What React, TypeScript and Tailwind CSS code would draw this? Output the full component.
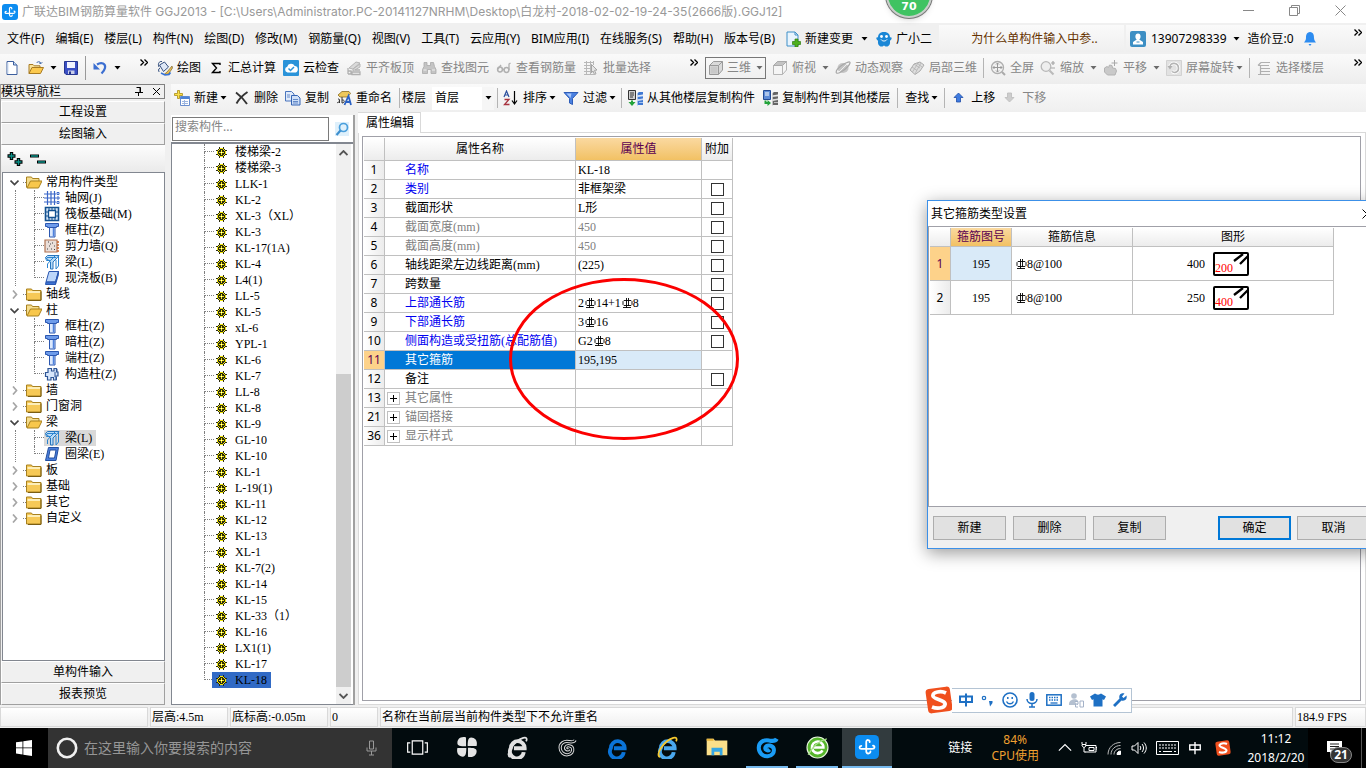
import { useState } from "react"
import type { ReactNode } from "react"

const UI_FONT = "font-['Noto_Sans','Noto_Sans_CJK_SC',sans-serif]"

// grid and tree text
function Song({ text }: { text: string }) {
  return <span className="font-['Liberation_Serif','Noto_Sans_CJK_SC',serif]">{text}</span>
}

function Svg({ children, size = "size-4" }: { children: ReactNode; size?: string }) {
  return (
    <svg viewBox="0 0 16 16" className={`${size} shrink-0`} fill="none" aria-hidden="true">
      {children}
    </svg>
  )
}

function Caret({ color = "text-black" }: { color?: string }) {
  return (
    <svg viewBox="0 0 7 4" className={`w-[7px] h-1 shrink-0 ${color}`} aria-hidden="true">
      <path d="M0.5 0h6L3.5 3.5z" fill="currentColor" />
    </svg>
  )
}

function More() {
  return (
    <svg viewBox="0 0 8 7" className="w-2 h-[7px] shrink-0" fill="none" stroke="#000" strokeWidth="1.4" aria-hidden="true">
      <path d="M0.5 0.5l3 3-3 3M4.5 0.5l3 3-3 3" />
    </svg>
  )
}

function AppLogo({ size = "size-4" }: { size?: string }) {
  return (
    <Svg size={size}>
      <rect width="16" height="16" rx="3" fill="#0c8cf0" />
      <path
        d="M9.800 4.800c.2-1.800-2.300-2-2.300-.2v6.200c0 2 2.600 2 2.800.2M4.200 7.300c-1.600.2-1.500 2 0 2h7.200c2 0 2-2 .6-2.200"
        stroke="#fff"
        strokeWidth="1.200"
        strokeLinecap="round"
      />
    </Svg>
  )
}

const icons = {
  doc: (
    <Svg>
      <path d="M3 1.500h6.500L13 5v9.500H3z" fill="#fff" stroke="#3d5f9e" />
      <path d="M9.500 1.500V5H13" fill="#c8dcf4" stroke="#3d5f9e" />
      <path d="M4 13.500V3" stroke="#cfe0f5" />
    </Svg>
  ),
  open: (
    <Svg>
      <path d="M1 13.500V4.500h4l1.200 1.300H12v2" fill="#f8e29a" stroke="#a87b22" />
      <path d="M1 13.500l3-6h11.500l-3 6z" fill="#fbc94e" stroke="#a87b22" />
      <path d="M8.500 3c1.500-2 4-1.500 4.500.5m0 0l1.300-1.300M13 3.500l-2-.6" stroke="#3c66a8" />
    </Svg>
  ),
  save: (
    <Svg>
      <path d="M1.500 1.500h13v13H3l-1.500-1.500z" fill="#3a4fc4" stroke="#27368f" />
      <path d="M4 2h8v6H4z" fill="#f2f4ff" />
      <path d="M5 10.500h6.500V14H5z" fill="#c9cfe9" />
      <path d="M6 11.500h2V14H6z" fill="#27368f" />
    </Svg>
  ),
  undo: (
    <Svg>
      <path d="M5 4.500c4.500-3 9-1 8 3.500-.5 2.500-2 4-3.500 5.500" stroke="#3c6fd1" strokeWidth="2.200" />
      <path d="M1.500 3v6.500H8z" fill="#3c6fd1" />
    </Svg>
  ),
  paint: (
    <Svg>
      <path d="M2.500 5l5-3 4 5-5 4.500z" fill="#dfe8f6" stroke="#35507f" />
      <path d="M2 7c-1.500-3 0-6 3-5.500M3 8c-2 1-1.500 3-.8 4" stroke="#35507f" />
      <path d="M15 6l-5 6-3 2.500 4.500-.5L15.500 8z" fill="#e8bf50" stroke="#7b6430" strokeWidth=".7" />
      <path d="M4 13l4 2 4-.5 1.500-2" stroke="#3572d6" strokeWidth="1.600" />
    </Svg>
  ),
  sigma: (
    <Svg>
      <path d="M12 5V3.500H4.500L8.500 8l-4 4.500H12V11" stroke="#000" strokeWidth="1.400" />
    </Svg>
  ),
  cloud: (
    <Svg>
      <rect width="16" height="16" rx="1" fill="#2a93d9" />
      <path d="M4.500 12.500a3 3 0 01-.3-5.800 4 4 0 017.500-.6 3.200 3.200 0 01-.2 6.400z" fill="#fff" />
      <path d="M5.500 8.500l2 2 3.500-3.500" stroke="#2a93d9" strokeWidth="1.500" />
    </Svg>
  ),
  flatten: (
    <Svg>
      <path d="M3 8l7-6 4 1-7 6zM7 9l7-5v3l-7 4z" fill="#d9d9d9" stroke="#b5b5b5" />
      <path d="M2 8v6M2 14h3v-3H2M6 12h8v2.500H6zM9 10h5" stroke="#b0b0b0" strokeWidth="1.300" />
    </Svg>
  ),
  binoculars: (
    <Svg>
      <path d="M3 2.500h3v3h3.500v-3h3l1 4 1.500 3v4h-5v-4h-3.500v4h-5v-4l1.500-3z" fill="#c4c4c4" stroke="#aaa" strokeWidth=".8" />
      <path d="M2.500 10h3M11 10h3" stroke="#eee" />
    </Svg>
  ),
  glasses: (
    <Svg>
      <circle cx="4" cy="9.500" r="2.400" stroke="#b0b0b0" strokeWidth="1.500" />
      <circle cx="10.500" cy="10" r="2.400" stroke="#b0b0b0" strokeWidth="1.500" />
      <path d="M6.500 9.500h1.500M2 9l3-4M13 10V4l1.500-1" stroke="#b0b0b0" strokeWidth="1.300" />
    </Svg>
  ),
  batch: (
    <Svg>
      <path d="M1 2.500h10M1 5.500h8M1 8.500h7M1 11.500h7M1 14.500h10M3.500 1v14M7.500 1v14M10.500 1v4" stroke="#b8b8b8" />
      <path d="M8.500 4.500l5.500 5.500-2.500.3 1.500 3.500-1.500.7-1.500-3.500-1.500 1.800z" fill="#e6e6e6" stroke="#a5a5a5" />
    </Svg>
  ),
  cube: (
    <Svg>
      <path d="M1.500 5.500l4-4h9v8.500l-4 4.500h-9z" fill="#dadada" stroke="#9a9a9a" />
      <path d="M1.500 5.500h9v9M10.500 5.500l4-4" stroke="#9a9a9a" />
      <path d="M2.500 6.500h7v7h-7z" fill="#c9c9c9" />
    </Svg>
  ),
  topView: (
    <Svg>
      <path d="M1.500 5.500l4-4h9v8.500l-4 4.500h-9z" fill="#f5f5f5" stroke="#b5b5b5" />
      <path d="M1.500 5.500l4-4h9l-4 4z" fill="#c4c4c4" stroke="#aaa" />
      <path d="M10.500 5.500v9" stroke="#b5b5b5" />
    </Svg>
  ),
  orbit: (
    <Svg>
      <ellipse cx="8" cy="8" rx="5.500" ry="5" fill="#c4c4c4" />
      <path d="M1.500 13C0 11 4 7 8 4.500S15.500 1 15 3s-4 6-7.500 8S3 14 1.500 13z" stroke="#a8a8a8" strokeWidth="1.200" />
      <path d="M4 12L12 4" stroke="#eee" />
    </Svg>
  ),
  partial: (
    <Svg>
      <path d="M1 10l4-6 6-2 4 3-4 6-5 3.500z" fill="#dedede" stroke="#acacac" />
      <path d="M3 7l5 3.500M5 4l6 4M8 3l5 4M6 14l2-4 4-7M3.500 12L9 3" stroke="#b2b2b2" strokeWidth=".8" />
    </Svg>
  ),
  full: (
    <Svg>
      <circle cx="7.500" cy="7.500" r="6" fill="#f2f2f2" stroke="#aeaeae" strokeWidth="1.300" />
      <path d="M7.500 3v9M3 7.500h9M6 4.500L7.500 3 9 4.500M6 10.500L7.500 12 9 10.500M4.500 6L3 7.500 4.500 9M10.500 6L12 7.500 10.500 9" stroke="#999" />
      <path d="M12 12l3 3" stroke="#aaa" strokeWidth="2" />
    </Svg>
  ),
  zoomer: (
    <Svg>
      <circle cx="6" cy="6.500" r="4.800" fill="#eee" stroke="#b8b8b8" strokeWidth="1.300" />
      <path d="M9.500 10.500l4 4" stroke="#bbb" strokeWidth="2.200" />
      <path d="M11 3h4M13 1v4M11 8h4" stroke="#a5a5a5" strokeWidth="1.200" />
    </Svg>
  ),
  pan: (
    <Svg>
      <path d="M1.500 8l2.500-1.500 1.500 1 1-2.500 2.500.5.5 2.500 3 .5 1 2.500-1.500 4H4.500l-3-3z" fill="#c9c9c9" stroke="#b3b3b3" />
      <path d="M11.500 0v6M8.500 3h6" stroke="#a8a8a8" />
    </Svg>
  ),
  rotate: (
    <Svg>
      <path d="M.5.5h15v15H.5z" fill="#e2e2e2" stroke="#d2d2d2" />
      <path d="M4 7c0-5 8-5 8.500 1 .3 4-4 5.500-6.500 3.500" stroke="#fff" strokeWidth="3.400" />
      <path d="M4 7c0-5 8-5 8.500 1 .3 4-4 5.500-6.500 3.500" stroke="#b4b4b4" strokeWidth="1.600" />
      <path d="M1.500 6h5L4 9.500z" fill="#b0b0b0" />
    </Svg>
  ),
  floors: (
    <Svg>
      <path d="M5 2.500h9M2 5.500h11M5 8.500h9M5 11.500h9M2 14.500h12M2 5.500L5 2.500M4.500 6v8" stroke="#b0b0b0" strokeWidth="1.200" />
    </Svg>
  ),
  add: (
    <Svg>
      <path d="M6.500 6.500h9v9h-9z" fill="#fff" stroke="#6b8fce" />
      <path d="M6.500 6.500h9V9h-9z" fill="#4d82d6" />
      <path d="M8 11.500h6M8 13.500h6M10.500 10v5" stroke="#9db6e0" />
      <path d="M3.500.5h2v3h3v2h-3v3h-2v-3h-3v-2h3z" fill="#fbe04a" stroke="#a98d16" strokeWidth=".8" />
    </Svg>
  ),
  remove: (
    <Svg>
      <path d="M2 2.500c4 3 8 7 11 11.500M13.500 2C9 5 5 9 2.500 13.500" stroke="#333" strokeWidth="1.900" />
    </Svg>
  ),
  copy: (
    <Svg>
      <path d="M.5 1.500h6l2.500 2.500v7H.5z" fill="#dfeafa" stroke="#4a75bd" />
      <path d="M6.500 5.500h6l2.500 2.500v7H6.500z" fill="#cfe0f8" stroke="#3565b5" />
      <path d="M8 9.500h5M8 11.500h5M8 13h5M2 5h3M2 7h3" stroke="#4a75bd" strokeWidth=".8" />
    </Svg>
  ),
  rename: (
    <Svg>
      <path d="M2 5l4-3.500h7l1.500 2-3 3.500H4z" fill="#eec85b" stroke="#8a6d22" strokeWidth=".8" />
      <path d="M1 12.500c2.500 1 3.500-4 1-3.500M3.500 9.500v3.500M6 7v6c3 0 3-3.500 0-3" stroke="#333" />
      <path d="M8.500 15L12.500 6 15 15M10 12h4.500" stroke="#2b62c4" strokeWidth="1.800" />
    </Svg>
  ),
  sort: (
    <Svg>
      <path d="M1 7l2.500-6L6 7M2 5h3" stroke="#2b4f9e" strokeWidth="1.200" />
      <path d="M1.500 9.500h4.500l-4.500 5H6.500" stroke="#a8333f" strokeWidth="1.300" />
      <path d="M11.500 1v12M9 10.500l2.500 3.500 2.500-3.500" stroke="#000" strokeWidth="1.200" />
    </Svg>
  ),
  filter: (
    <Svg>
      <path d="M1 2.500h14L9.500 8.500v6l-3-1.500V8.500z" fill="#4a80e0" stroke="#2d5cb8" />
      <path d="M3.500 3.500h5l-1 4.500z" fill="#a9c7fa" />
    </Svg>
  ),
  fromFloor: (
    <Svg>
      <path d="M1.500.5h7v9h-7z" fill="#d0d0d0" stroke="#333" />
      <path d="M3 3h4M3 5h4M3 7h3" stroke="#333" />
      <path d="M10 3.500l2-1.500h4v2.500l-6 1zM10 7l6-1v2.500l-6 1zM10 11l6-1v5H10z" fill="#3f78d2" />
      <path d="M10.500 3v13M12 6h4M12 9.500h4M12 12.500h4" stroke="#bcd4f7" strokeWidth=".8" />
      <path d="M4 10.500v1.500H1.500l3.500 4 3.500-4H6v-1.500z" fill="#23a33a" />
    </Svg>
  ),
  toFloor: (
    <Svg>
      <path d="M1.500.5h7v9h-7z" fill="#5d8bd6" stroke="#234a94" />
      <path d="M3 3h4M3 5h4" stroke="#fff" />
      <path d="M10 3.500l2-1.500h4v2.500l-6 1zM10 7l6-1v2.500l-6 1zM10 11l6-1v5H10z" fill="#666" />
      <path d="M10.500 3v13M12 6h4M12 9.500h4M12 12.500h4" stroke="#d6d6d6" strokeWidth=".8" />
      <path d="M2.500 10.500v3.500h3V16l3.500-3-3.500-3v2h-1v-1.500z" fill="#23a33a" />
    </Svg>
  ),
  up: (
    <Svg>
      <path d="M7.500 3l4.500 4.500H9.500V12h-4V7.500H3z" fill="#3f7be0" stroke="#1f4ea8" strokeWidth=".8" />
    </Svg>
  ),
  down: (
    <Svg>
      <path d="M7.500 12L3 7.500h2.500V3h4v4.500H12z" fill="#cdcdcd" stroke="#bbb" strokeWidth=".8" />
    </Svg>
  ),
  change: (
    <Svg>
      <path d="M2 1h8l3 3v11H2z" fill="#e9f4fd" stroke="#3f8fc8" />
      <path d="M10 1v3h3" stroke="#3f8fc8" />
      <path d="M10 8h3v2.500h2.500v3H13V16h-3v-2.500H7.500v-3H10z" fill="#4db01e" stroke="#2f7d10" strokeWidth=".7" />
    </Svg>
  ),
  mascot: (
    <Svg>
      <path d="M8 1c4.500 0 6 2.500 6 5.500 1.500-.5 2 .5 1.500 1.500S14 9.500 14 10c.5 3-1 5-2.500 5.500H9.500l-1.500-1-1.500 1h-2C3 15 1.500 13 2 10c0-.5-1-1-1.500-2S.5 6 2 6.500C2 3.500 3.500 1 8 1z" fill="#1b87d6" />
      <circle cx="5.500" cy="5.500" r="1.400" fill="#fff" />
      <circle cx="10.500" cy="5.500" r="1.400" fill="#fff" />
      <path d="M5 8.500c1.500 2 4.500 2 6 0" stroke="#fff" />
    </Svg>
  ),
  user: (
    <Svg>
      <rect width="16" height="16" rx="2" fill="#3d8fc4" />
      <path d="M8 2.500c3.500 0 3 5 1.200 6L13 11v2.500H3V11l3.800-2.500C5 7.500 4.500 2.500 8 2.500z" fill="#fff" />
      <path d="M6.500 11h3" stroke="#3d8fc4" />
    </Svg>
  ),
  bell: (
    <Svg>
      <path d="M8 1c3.500.5 4 3 4 6 0 2 1 3 2 4.500H2C3 10 4 9 4 7c0-3 .5-5.500 4-6z" fill="#2d8cf0" />
      <path d="M6.500 13h3L8 15z" fill="#2d8cf0" />
    </Svg>
  ),
  folder: (
    <Svg>
      <path d="M.5 3h5l1 1.500h8.500v9.500H.5z" fill="#f6c957" stroke="#a8811f" />
      <path d="M1.500 6h12.500" stroke="#fdeeb8" strokeWidth="2" />
      <path d="M15 5.500v9H2" stroke="#7b5e14" />
    </Svg>
  ),
  folderOpen: (
    <Svg>
      <path d="M.5 13.500V3h5l1 1.500h6.500V7" fill="#f5dd8e" stroke="#a8811f" />
      <path d="M1 14l3.500-7H16l-3.500 7z" fill="#f8c74c" stroke="#a8811f" />
    </Svg>
  ),
  grid: (
    <Svg>
      <path d="M0 4h12M0 8h12M0 12h12M3.500 1v14M7 1v14M10.500 1v14" stroke="#3a66c8" strokeWidth="1.200" />
      <path d="M13 2.500h2v2h-2zM13 7h2v2h-2zM13 11.500h2v2h-2z" stroke="#3a66c8" />
    </Svg>
  ),
  raft: (
    <Svg>
      <path d="M1.500 1.500h13v13h-13z" fill="#dcebfb" stroke="#13508f" strokeWidth="1.600" />
      <path d="M4.500 4.500h7v7h-7z" fill="#fff" stroke="#13508f" strokeWidth="1.300" />
      <path d="M5 1.500v3M8 1.500v3M11 1.500v3M5 11.500v3M8 11.500v3M11 11.500v3M1.500 6h3M1.500 10h3M11.500 6h3M11.500 10h3" stroke="#13508f" />
    </Svg>
  ),
  column: (
    <Svg>
      <path d="M1.500 1.500h13v3h-2v1h-9v-1h-2z" fill="#6d9bea" stroke="#2b57b0" />
      <path d="M5.500 5.500h5.500v9.500H5.500z" fill="#dce9fd" stroke="#2b57b0" />
      <path d="M9.500 6v8.500" stroke="#4f82de" strokeWidth="1.500" />
    </Svg>
  ),
  wall: (
    <Svg>
      <path d="M1 2h12v12H1z" fill="#eadfda" stroke="#b07352" strokeWidth="1.200" />
      <path d="M4 4h1M8 5h1M5 8h1M10 8h1M3 11h1M7 11h1M10 11.500h1M6 6h1" stroke="#444" />
      <path d="M13 4h2M13 7h2M13 10h2M13 13h2" stroke="#c8642f" strokeWidth="1.300" />
    </Svg>
  ),
  beam: (
    <Svg>
      <path d="M1.500 3.500l2-2h11.500l-3 3.500-3 3v7h-2.500V8z" fill="#b9dcf8" stroke="#2675bd" />
      <path d="M1.500 3.500l1 3h4l5-5M6.500 6.500L3.500 10v4M14.500 2v10l-2.500 3V6M3 3.500h9" stroke="#2b84d0" />
    </Svg>
  ),
  slab: (
    <Svg>
      <path d="M5 1.500h9.500L11.500 12H2z" fill="#bcd6fa" stroke="#2b57b0" />
      <path d="M2 12h9.500v2.500H1.500zM11.500 12l3-10.500v3L11.500 14.500" fill="#3d72d2" stroke="#2b57b0" />
    </Svg>
  ),
  tieColumn: (
    <Svg>
      <path d="M4 2.500h3.500V5H10V2.500h2.500V6H14v4h-2v4H9.500v-2.500H7V14H3.500v-3.500H1.500v-4H4z" fill="#d7e6fb" stroke="#2e5596" strokeWidth="1.200" />
      <path d="M11 6v5M13 3v3M12.500 11v3" stroke="#2e5596" />
    </Svg>
  ),
  ringBeam: (
    <Svg>
      <path d="M4.500 1.500h10L12 14.500H1.500z" fill="#4a7edb" stroke="#234f9f" />
      <path d="M6 4h6l-1.500 8H4.500z" fill="#fff" stroke="#234f9f" />
    </Svg>
  ),
}

type IconName = keyof typeof icons

interface ToolProps {
  icon?: IconName
  label: string
  caret?: "near" | "far"
  disabled?: boolean
}

function Tool({ icon, label, caret, disabled }: ToolProps) {
  return (
    <button
      className={`flex items-center gap-1 shrink-0 whitespace-nowrap ${disabled ? "text-[#868686]" : "text-black"}`}
      disabled={disabled}
    >
      {icon && icons[icon]}
      <span>{label}</span>
      {caret && (
        <span className={caret === "near" ? "-ml-[2px]" : "ml-[2px]"}>
          <Caret color={disabled ? "text-[#6b6b6b]" : "text-black"} />
        </span>
      )}
    </button>
  )
}

function Separator() {
  return <div className="w-px h-5 bg-[#b4b4b4] shrink-0" />
}

const menus = [
  "文件(F)", "编辑(E)", "楼层(L)", "构件(N)", "绘图(D)", "修改(M)", "钢筋量(Q)", "视图(V)",
  "工具(T)", "云应用(Y)", "BIM应用(I)", "在线服务(S)", "帮助(H)", "版本号(B)",
]

function TitleBar() {
  return (
    <header className="relative flex items-center h-[23px] pl-[2px] bg-white text-[#999] shrink-0">
      <AppLogo />
      <h1 className="ml-1 flex-1 whitespace-nowrap font-['Inter','Noto_Sans_CJK_SC',sans-serif]">
        广联达BIM钢筋算量软件 GGJ2013 - [C:\Users\Administrator.PC-20141127NRHM\Desktop\白龙村-2018-02-02-19-24-35(2666版).GGJ12]
      </h1>
      <div className="flex items-center gap-[35px] pr-5 pb-[2px]">
        <button aria-label="最小化">
          <svg viewBox="0 0 11 11" className="size-[11px]" stroke="#888"><path d="M0 5.500h11" /></svg>
        </button>
        <button aria-label="还原">
          <svg viewBox="0 0 11 11" className="size-[11px]" stroke="#888" fill="none">
            <path d="M.5 2.500h8v8h-8zM2.500 2.500v-2h8v8h-2" />
          </svg>
        </button>
        <button aria-label="关闭">
          <svg viewBox="0 0 11 11" className="size-[11px]" stroke="#888"><path d="M.5.5l10 10M10.500.5l-10 10" /></svg>
        </button>
      </div>
      <div className="absolute left-[886px] -top-7 flex items-end justify-center size-[46px] pb-[3px] rounded-full bg-[#3fc362] border-2 border-[#c9cfcb] ring-1 ring-[#777] shadow-md text-white font-bold text-[11px] font-['DejaVu_Sans',sans-serif] z-10">
        <span className="leading-[12px]">70</span>
      </div>
    </header>
  )
}

function MenuBar() {
  return (
    <nav className="flex items-center h-[31px] bg-[#f0f0f0] shrink-0 whitespace-nowrap">
      <div className="flex items-center gap-[11px] pl-[7px]">
        {menus.map((m) => (
          <button key={m}>{m}</button>
        ))}
      </div>
      <div className="flex items-center gap-2 ml-[10px]">
        <button className="flex items-center gap-1">
          {icons.change}
          新建变更
        </button>
        <Caret />
        <button className="flex items-center gap-1">
          {icons.mascot}
          广小二
        </button>
      </div>
      <div className="flex flex-1 items-center justify-center h-[27px] ml-[7px] pl-[6px] bg-linear-to-b from-[#fafafa] to-[#efefef] text-[#663300]">
        <a href="#faq">为什么单构件输入中参..</a>
      </div>
      <div className="flex items-center h-[27px] w-[240px] ml-[2px] pl-1 bg-linear-to-b from-[#fafafa] to-[#efefef]">
        <button className="flex items-center gap-[5px]">
          {icons.user}
          13907298339
        </button>
        <div className="ml-[6px] flex"><Caret /></div>
        <span className="ml-2">造价豆:0</span>
        <button className="ml-2" aria-label="消息">{icons.bell}</button>
        <div className="ml-auto mb-3 mr-1"><More /></div>
      </div>
    </nav>
  )
}

function MainToolbar() {
  return (
    <div className="flex h-[30px] bg-linear-to-b from-[#fafafa] to-[#ededed] shrink-0 pb-[2px]">
      <div className="flex items-center w-[153px] pl-1 shrink-0">
        <button aria-label="新建工程">{icons.doc}</button>
        <button className="ml-2" aria-label="打开">{icons.open}</button>
        <div className="ml-[6px] flex"><Caret /></div>
        <button className="ml-[6px]" aria-label="保存">{icons.save}</button>
        <div className="w-px h-6 ml-[6px] bg-[#999]" />
        <button className="ml-[6px]" aria-label="撤销">{icons.undo}</button>
        <div className="ml-[6px] flex"><Caret /></div>
        <div className="ml-auto mr-[5px] mb-3 flex"><More /></div>
      </div>
      <div className="flex items-center gap-[7px] w-[549px] pl-1 shrink-0">
        <Tool icon="paint" label="绘图" />
        <Tool icon="sigma" label="汇总计算" />
        <Tool icon="cloud" label="云检查" />
        <Tool icon="flatten" label="平齐板顶" disabled />
        <Tool icon="binoculars" label="查找图元" disabled />
        <Tool icon="glasses" label="查看钢筋量" disabled />
        <Tool icon="batch" label="批量选择" disabled />
        <div className="ml-auto mr-1 mb-3 flex"><More /></div>
      </div>
      <div className="flex flex-1 items-center gap-[6px] pl-[3px]">
        <button className="flex items-center gap-[3px] h-[22px] w-[61px] px-[2px] border border-[#777] text-[#868686] whitespace-nowrap shrink-0" disabled>
          {icons.cube}
          三维
          <span className="ml-auto"><Caret color="text-[#6b6b6b]" /></span>
        </button>
        <Tool icon="topView" label="俯视" caret="far" disabled />
        <Tool icon="orbit" label="动态观察" disabled />
        <Tool icon="partial" label="局部三维" disabled />
        <Separator />
        <Tool icon="full" label="全屏" disabled />
        <Tool icon="zoomer" label="缩放" caret="far" disabled />
        <Tool icon="pan" label="平移" caret="far" disabled />
        <Tool icon="rotate" label="屏幕旋转" caret="near" disabled />
        <Separator />
        <Tool icon="floors" label="选择楼层" disabled />
        <div className="ml-auto mr-1 mb-3 flex"><More /></div>
      </div>
    </div>
  )
}

interface NavNode {
  label: string
  children?: { label: string; icon: IconName; selected?: boolean }[]
}

const navTree: NavNode[] = [
  {
    label: "常用构件类型",
    children: [
      { label: "轴网(J)", icon: "grid" },
      { label: "筏板基础(M)", icon: "raft" },
      { label: "框柱(Z)", icon: "column" },
      { label: "剪力墙(Q)", icon: "wall" },
      { label: "梁(L)", icon: "beam" },
      { label: "现浇板(B)", icon: "slab" },
    ],
  },
  { label: "轴线" },
  {
    label: "柱",
    children: [
      { label: "框柱(Z)", icon: "column" },
      { label: "暗柱(Z)", icon: "column" },
      { label: "端柱(Z)", icon: "column" },
      { label: "构造柱(Z)", icon: "tieColumn" },
    ],
  },
  { label: "墙" },
  { label: "门窗洞" },
  {
    label: "梁",
    children: [
      { label: "梁(L)", icon: "beam", selected: true },
      { label: "圈梁(E)", icon: "ringBeam" },
    ],
  },
  { label: "板" },
  { label: "基础" },
  { label: "其它" },
  { label: "自定义" },
]

function Elbow({ last }: { last?: boolean }) {
  return (
    <div className="w-[10px] h-4 shrink-0">
      <div className="h-2 border-l border-b border-dotted border-[#808080]" />
      {!last && <div className="h-2 border-l border-dotted border-[#808080]" />}
    </div>
  )
}

function NavButton({ label }: { label: string }) {
  return (
    <button className="h-[22px] shrink-0 leading-5 text-center border-t border-l border-white border-b border-b-[#a0a0a0] border-r border-r-[#a0a0a0] bg-[#f0f0f0]">
      {label}
    </button>
  )
}

function ModuleNav() {
  return (
    <aside className="flex flex-col w-[165px] shrink-0 mb-[2px] border-l border-[#a0a0a0]">
      <div className="flex items-center h-[15px] border border-[#808080] border-l-0 leading-3 shrink-0">
        <h2 className="flex-1 whitespace-nowrap">模块导航栏</h2>
        <button aria-label="固定">
          <svg viewBox="0 0 8 9" className="w-2 h-[9px]" fill="none" stroke="#000"><path d="M1.500.5h4v5M5 .5v5M0 5.500h8M3.500 5.500V9" /></svg>
        </button>
        <button className="ml-[9px] mr-[3px]" aria-label="关闭">
          <svg viewBox="0 0 9 9" className="size-[9px]" stroke="#000"><path d="M1 1l7 7M8 1L1 8" /></svg>
        </button>
      </div>
      <div className="h-[2px] shrink-0" />
      <NavButton label="工程设置" />
      <NavButton label="绘图输入" />
      <div className="flex items-center h-[27px] pl-[6px] shrink-0 bg-linear-to-b from-[#fdfdfd] to-[#eaeaea]">
        <button aria-label="展开">
          <svg viewBox="0 0 40 16" className="w-10 h-4" fill="none">
            <path d="M4.500 1v8M.5 5h8M11.500 7v8M7.500 11h8" stroke="#000" strokeWidth="3.400" />
            <path d="M4.500 2v6M1.500 5h6M11.500 8v6M8.500 11h6" stroke="#0a8f86" strokeWidth="1.400" />
            <path d="M23 5h9M30 11h9" stroke="#000" strokeWidth="3.200" />
            <path d="M24 5h7M31 11h7" stroke="#0a8f86" strokeWidth="1.400" />
          </svg>
        </button>
      </div>
      <ul className="flex-1 min-h-0 overflow-hidden pt-px ml-px bg-white border border-[#828790] leading-4">
        {navTree.map((node) => (
          <li key={node.label}>
            <div className="flex items-center h-4 pl-[7px]">
              <svg viewBox="0 0 9 9" className="size-[9px] shrink-0" fill="none" strokeWidth="1.700">
                {node.children ? <path d="M.5 2.500l4 4 4-4" stroke="#444" /> : <path d="M3 .5l3.500 4L3 8.500" stroke="#a6a6a6" />}
              </svg>
              <div className="w-[3px] ml-1 border-t border-dotted border-[#808080]" />
              {icons[node.children ? "folderOpen" : "folder"]}
              <span className="ml-1 whitespace-nowrap">{node.label}</span>
            </div>
            {node.children && (
              <ul className="ml-3 border-l border-dotted border-[#808080]">
                {node.children.map((child, i) => (
                  <li key={child.label} className="flex items-center h-4 pl-[18px]">
                    <Elbow last={i === node.children!.length - 1} />
                    <div className={`flex items-center h-4 pr-1 whitespace-nowrap ${child.selected ? "bg-[#d9d9d9]" : ""}`}>
                      {icons[child.icon]}
                      <span className="ml-[5px]">
                        <Song text={child.label} />
                      </span>
                    </div>
                  </li>
                ))}
              </ul>
            )}
          </li>
        ))}
      </ul>
      <NavButton label="单构件输入" />
      <NavButton label="报表预览" />
    </aside>
  )
}

function ComponentToolbar() {
  return (
    <div className="flex items-center gap-[7px] h-7 pl-[3px] shrink-0 bg-linear-to-b from-[#fafafa] to-[#efefef]">
      <Tool icon="add" label="新建" caret="near" />
      <Tool icon="remove" label="删除" />
      <Tool icon="copy" label="复制" />
      <Tool icon="rename" label="重命名" />
      <div className="flex items-center gap-[2px] shrink-0">
        <Separator />
        <label htmlFor="floor">楼层</label>
        <div className="relative flex items-center ml-1 h-[23px] w-[62px] bg-white">
          <select id="floor" className="appearance-none w-full h-full pl-[3px] pr-3 bg-white outline-none">
            <option>首层</option>
            <option>基础层</option>
          </select>
          <span className="absolute right-0 top-0 flex items-center justify-center h-full w-3 bg-[#f6f6f6] pointer-events-none">
            <Caret />
          </span>
        </div>
      </div>
      <div className="-ml-1 -mr-[2px]"><Separator /></div>
      <Tool icon="sort" label="排序" caret="near" />
      <Tool icon="filter" label="过滤" caret="near" />
      <div className="-mx-[2px]"><Separator /></div>
      <Tool icon="fromFloor" label="从其他楼层复制构件" />
      <Tool icon="toFloor" label="复制构件到其他楼层" />
      <Separator />
      <Tool label="查找" caret="near" />
      <div className="-mx-px"><Separator /></div>
      <Tool icon="up" label="上移" />
      <Tool icon="down" label="下移" disabled />
    </div>
  )
}

const components = [
  "楼梯梁-2", "楼梯梁-3", "LLK-1", "KL-2", "XL-3（XL）", "KL-3", "KL-17(1A)", "KL-4", "L4(1)", "LL-5", "KL-5",
  "xL-6", "YPL-1", "KL-6", "KL-7", "LL-8", "KL-8", "KL-9", "GL-10", "KL-10", "KL-1", "L-19(1)", "KL-11", "KL-12",
  "KL-13", "XL-1", "KL-7(2)", "KL-14", "KL-15", "KL-33（1）", "KL-16", "LX1(1)", "KL-17", "KL-18",
]

function Gear() {
  return (
    <svg viewBox="0 0 11 11" className="size-[11px] shrink-0" fill="none" aria-hidden="true">
      <path d="M3 0h1v1h3V0h1v2h1v1h2v1h-1v3h1v1H9v1H8v2H7v-1H4v1H3V9H2V8H0V7h1V4H0V3h2V2h1z" fill="#2a2a10" />
      <path d="M4 1h3v1H4zM4 9h3v1H4zM1 4h1v3H1zM9 4h1v3H9zM3 2h1v1H3zM7 2h1v1H7zM3 8h1v1H3zM7 8h1v1H7zM2 3h1v1H2zM8 3h1v1H8zM2 7h1v1H2zM8 7h1v1H8z" fill="#f6ec10" />
      <path d="M3 5h5v1H3zM5 3h1v5H5z" fill="#f6ec10" />
      <path d="M5 5h1v1H5z" fill="#fff" />
    </svg>
  )
}

function ComponentList() {
  const [query, setQuery] = useState("")
  const [selected, setSelected] = useState("KL-18")

  return (
    <section className="flex flex-col w-[184px] shrink-0 mt-[3px] border-r-2 border-[#a0a0a0] bg-white">
      <div className="flex items-center h-[27px] pl-px shrink-0 bg-white">
        <input
          type="text"
          value={query}
          onChange={(e) => setQuery(e.target.value)}
          placeholder="搜索构件..."
          aria-label="搜索构件"
          className="w-[157px] h-6 px-[2px] pb-1 border border-[#7a7a7a] bg-white outline-none placeholder:text-[#858585]"
        />
        <button className="flex items-center justify-center w-[14px] h-[14px] ml-[6px] bg-[#dff0fb]" aria-label="搜索">
          <svg viewBox="0 0 14 14" className="size-[14px]" fill="none">
            <circle cx="8.500" cy="5.500" r="4" stroke="#4a9fdc" strokeWidth="1.700" />
            <path d="M5.500 8.500l-4 4.500" stroke="#3d8fce" strokeWidth="2.200" />
          </svg>
        </button>
      </div>
      <div className="flex flex-1 min-h-0 overflow-hidden border-t-2 border-l border-b border-[#828790]">
        <ul className="flex-1 pl-8 leading-4">
          {components.map((name, i) => (
            <li key={name} className="flex items-center h-4">
              <Elbow last={i === components.length - 1} />
              <button
                onClick={() => setSelected(name)}
                className={`flex items-center h-4 -ml-[2px] pl-1 pr-1 whitespace-nowrap ${selected === name ? "bg-[#316ac5]" : ""}`}
              >
                <Gear />
                <span className="ml-2">
                  <Song text={name} />
                </span>
              </button>
            </li>
          ))}
        </ul>
        <div className="flex flex-col w-[15px] mr-[2px] bg-[#f0f0f0]">
          <div className="flex items-center justify-center h-[17px]">
            <svg viewBox="0 0 9 6" className="w-[9px] h-[6px]" fill="none" stroke="#555" strokeWidth="1.800"><path d="M.5 5l4-4 4 4" /></svg>
          </div>
          <div className="flex-1" />
          <div className="h-[313px] bg-[#cdcdcd]" />
          <div className="flex items-center justify-center h-[17px]">
            <svg viewBox="0 0 9 6" className="w-[9px] h-[6px]" fill="none" stroke="#555" strokeWidth="1.800"><path d="M.5 1l4 4 4-4" /></svg>
          </div>
        </div>
      </div>
    </section>
  )
}

// HRB400 bar mark
function Rebar() {
  return (
    <svg viewBox="0 0 12 12" className="inline-block w-3 h-3 align-[-2px]" fill="none" stroke="#000" aria-hidden="true">
      <path d="M3 3.500h7l1 1v3l-1 1H3l-1-1v-3zM5.500 1v10M7.500 1v8M2 10.500h8" strokeWidth=".9" />
    </svg>
  )
}

function withRebar(text: string) {
  return text.split("Φ").map((part, i) => (
    <span key={i}>
      {i > 0 && <Rebar />}
      <Song text={part} />
    </span>
  ))
}

interface PropRow {
  no: number
  name: string
  value?: string
  tone?: "blue" | "gray" | "black"
  check?: boolean
  group?: boolean
}

const rows: PropRow[] = [
  { no: 1, name: "名称", value: "KL-18", tone: "blue" },
  { no: 2, name: "类别", value: "非框架梁", tone: "blue", check: true },
  { no: 3, name: "截面形状", value: "L形", check: true },
  { no: 4, name: "截面宽度(mm)", value: "450", tone: "gray", check: true },
  { no: 5, name: "截面高度(mm)", value: "450", tone: "gray", check: true },
  { no: 6, name: "轴线距梁左边线距离(mm)", value: "(225)", check: true },
  { no: 7, name: "跨数量", check: true },
  { no: 8, name: "上部通长筋", value: "2Φ14+1Φ8", tone: "blue", check: true },
  { no: 9, name: "下部通长筋", value: "3Φ16", tone: "blue", check: true },
  { no: 10, name: "侧面构造或受扭筋(总配筋值)", value: "G2Φ8", tone: "blue", check: true },
  { no: 11, name: "其它箍筋", value: "195,195" },
  { no: 12, name: "备注", check: true },
  { no: 13, name: "其它属性", tone: "gray", group: true },
  { no: 21, name: "锚固搭接", tone: "gray", group: true },
  { no: 36, name: "显示样式", tone: "gray", group: true },
]

const toneClass = { blue: "text-[#0000f0]", gray: "text-[#808080]", black: "text-black" }
const cell = "p-0 border-r border-b border-[#c0c0c0] font-normal whitespace-nowrap"
const headFill = "bg-linear-to-b from-white to-[#ececec]"
const headActive = "bg-linear-to-b from-[#fad9a0] to-[#f2c163] text-[#5a0050]"

function PropertyTable() {
  return (
    <div className="relative w-[369px]">
      <table className="w-full table-fixed border-separate border-spacing-0 leading-[14px]">
        <colgroup>
          <col className="w-[21px]" />
          <col className="w-[191px]" />
          <col className="w-[126px]" />
          <col className="w-[31px]" />
        </colgroup>
        <thead>
          <tr className="h-[23px]">
            <th className={`${cell} ${headFill}`} />
            <th className={`${cell} ${headFill}`}>属性名称</th>
            <th className={`${cell} ${headActive}`}>属性值</th>
            <th className={`${cell} ${headFill}`}>附加</th>
          </tr>
        </thead>
        <tbody>
          {rows.map((row) => {
            const active = row.no === 11
            const tone = toneClass[row.tone ?? "black"]
            return (
              <tr key={row.no} className="h-[19px]">
                <th className={`${cell} text-center ${active ? "bg-[#fdd28a] text-[#5a0050]" : "bg-linear-to-r from-white to-[#ececec]"}`}>
                  {row.no}
                </th>
                <td className={`${cell} ${active ? "bg-[#0078d7] text-white" : tone}`}>
                  <div className="flex items-center">
                    <div className="flex items-center w-5 pl-[2px] shrink-0">
                      {row.group && (
                        <button className="size-[13px] border border-[#c0c0c0] bg-white" aria-label={`展开${row.name}`}>
                          <svg viewBox="0 0 11 11" className="size-[11px]" stroke="#000"><path d="M5.500 2v7M2 5.500h7" /></svg>
                        </button>
                      )}
                    </div>
                    <Song text={row.name} />
                  </div>
                </td>
                <td className={`${cell} pl-[2px] ${active ? "bg-[#d9eaf8]" : tone === toneClass.gray ? tone : ""}`}>
                  {row.value && withRebar(row.value)}
                </td>
                <td className={`${cell} text-center`}>
                  {row.check && (
                    <input
                      type="checkbox"
                      aria-label={`附加 ${row.name}`}
                      className="block mx-auto appearance-none size-[13px] border border-[#333] bg-white"
                    />
                  )}
                </td>
              </tr>
            )
          })}
        </tbody>
      </table>
      <svg
        viewBox="0 0 230 162"
        className="absolute left-[145px] top-[140px] w-[230px] h-[162px] pointer-events-none"
        fill="none"
        aria-hidden="true"
      >
        <ellipse cx="115" cy="81" rx="113.500" ry="79.500" stroke="#fb0000" strokeWidth="3" />
      </svg>
    </div>
  )
}

function PropertyEditor() {
  return (
    <section className="flex flex-col flex-1 min-w-0 ml-[3px]">
      <div className="flex h-[21px] shrink-0 bg-white">
        <button className="h-[21px] w-[63px] pl-[2px] border-r border-t border-[#d9d9d9] bg-white leading-[18px]">属性编辑</button>
        <div className="flex-1 border-b border-[#d9d9d9]" />
      </div>
      <div className="flex flex-1 min-h-0 pt-[3px] pb-[3px] pl-[3px] pr-1 bg-white border-r border-b border-l border-[#d9d9d9]">
        <div className="flex-1 pt-px pl-px border border-[#a0a0a8] bg-white">
          <PropertyTable />
        </div>
      </div>
    </section>
  )
}

function Stirrup({ outer, inner }: { outer: string; inner: string }) {
  return (
    <div className="flex items-center pl-[54px] gap-2 pt-px">
      <Song text={outer} />
      <div className="relative w-9 h-6">
        <svg viewBox="0 0 36 24" className="absolute inset-0 w-9 h-6" fill="none" stroke="#000" strokeWidth="2">
          <rect x="1" y="1" width="34" height="22" rx="1" />
          <path d="M21 9l9-7M27 12l8-8" strokeWidth="2.300" />
        </svg>
        <span className="absolute left-[2px] bottom-0 text-[#f00]">
          <Song text={inner} />
        </span>
      </div>
    </div>
  )
}

const stirrups = [
  { no: 1, shape: "195", info: "Φ8@100", outer: "400", inner: "200" },
  { no: 2, shape: "195", info: "Φ8@100", outer: "250", inner: "400" },
]

function DialogButton({ label, primary }: { label: string; primary?: boolean }) {
  return (
    <button
      className={`h-6 w-[73px] shrink-0 bg-[#e1e1e1] ${primary ? "border-2 border-[#0078d7] leading-5" : "border border-[#adadad] leading-[22px]"}`}
    >
      {label}
    </button>
  )
}

function StirrupDialog() {
  return (
    <div
      role="dialog"
      aria-label="其它箍筋类型设置"
      className="absolute left-[927px] top-[200px] flex flex-col w-[448px] h-[349px] border border-[#3c90e8] bg-[#f0f0f0] shadow-[0_4px_16px_rgba(0,0,0,0.4)]"
    >
      <div className="flex items-center justify-between h-[25px] pl-[3px] pr-[2px] bg-white shrink-0">
        <h2>其它箍筋类型设置</h2>
        <button aria-label="关闭">
          <svg viewBox="0 0 10 10" className="size-[10px]" stroke="#000"><path d="M.5.5l9 9M9.500.5l-9 9" /></svg>
        </button>
      </div>
      <div className="flex-1 pt-px pl-px bg-white border-t border-b border-l border-[#a0a0a8]">
        <table className="w-[404px] table-fixed border-separate border-spacing-0 leading-4">
          <colgroup>
            <col className="w-[21px]" />
            <col className="w-[61px]" />
            <col className="w-[121px]" />
            <col className="w-[201px]" />
          </colgroup>
          <thead>
            <tr className="h-[19px]">
              <th className={`${cell} ${headFill}`} />
              <th className={`${cell} ${headActive}`}>箍筋图号</th>
              <th className={`${cell} ${headFill}`}>箍筋信息</th>
              <th className={`${cell} ${headFill}`}>图形</th>
            </tr>
          </thead>
          <tbody>
            {stirrups.map((s, i) => (
              <tr key={s.no} className="h-[34px]">
                <th className={`${cell} text-center ${i === 0 ? "bg-[#fdd28a] text-[#5a0050]" : "bg-linear-to-r from-white to-[#ececec]"}`}>
                  {s.no}
                </th>
                <td className={`${cell} text-center ${i === 0 ? "bg-[#d9eaf8]" : ""}`}>
                  <Song text={s.shape} />
                </td>
                <td className={`${cell} pl-[3px]`}>{withRebar(s.info)}</td>
                <td className={cell}>
                  <Stirrup outer={s.outer} inner={s.inner} />
                </td>
              </tr>
            ))}
          </tbody>
        </table>
      </div>
      <div className="flex items-center gap-[7px] h-[41px] pl-[5px] shrink-0">
        <DialogButton label="新建" />
        <DialogButton label="删除" />
        <DialogButton label="复制" />
        <div className="flex gap-[6px] ml-[45px]">
          <DialogButton label="确定" primary />
          <DialogButton label="取消" />
        </div>
      </div>
    </div>
  )
}

function StatusBar() {
  const box = "h-5 border border-[#d9d9d9] bg-linear-to-b from-white to-[#f0f0f0] leading-[18px] pl-px whitespace-nowrap"
  return (
    <footer className="flex gap-[2px] h-[21px] pb-px shrink-0 bg-[#f0f0f0]">
      <div className={`${box} w-[148px]`} />
      <div className={`${box} w-[78px]`}><Song text="层高:4.5m" /></div>
      <div className={`${box} w-[98px]`}><Song text="底标高:-0.05m" /></div>
      <div className={`${box} w-12`}><Song text="0" /></div>
      <div className={`${box} flex-1`}>名称在当前层当前构件类型下不允许重名</div>
      <div className={`${box} w-[71px]`}><Song text="184.9 FPS" /></div>
    </footer>
  )
}

function SogouLogo({ size }: { size: string }) {
  return (
    <Svg size={size}>
      <rect x="1" y="1" width="14" height="14" rx="2" fill="#f0501e" transform="rotate(-8 8 8)" />
      <path d="M12 4C9 2.500 4.500 3.500 4.500 5.500S12 8 11.500 10.500 6.500 13 4 12" stroke="#fff" strokeWidth="2.100" />
    </Svg>
  )
}

function SogouBar() {
  return (
    <div className="absolute left-[925px] bottom-[54px] flex items-center h-[28px]">
      <SogouLogo size="size-7" />
      <div className="flex items-center gap-[6px] h-[25px] pl-[6px] pr-[3px] -ml-px border border-l-0 border-[#b4c4d4] bg-white text-[#1e70c4]">
        <Svg><path d="M2 4.500h12v5.500H2zM8 1.500v13" stroke="currentColor" strokeWidth="2" /></Svg>
        <Svg>
          <circle cx="4" cy="6" r="1.700" stroke="currentColor" strokeWidth="1.200" />
          <path d="M9 9h3.500v2L10 14.500" fill="currentColor" />
        </Svg>
        <Svg>
          <circle cx="8" cy="8" r="7" stroke="currentColor" strokeWidth="1.600" />
          <path d="M4.500 9.500c1.500 3 5.500 3 7 0M5.800 5v2M10.200 5v2" stroke="currentColor" strokeWidth="1.500" />
        </Svg>
        <Svg>
          <rect x="5.500" y="0" width="5" height="9" rx="2.500" fill="currentColor" />
          <path d="M3 7c0 6 10 6 10 0M8 12v3M5 15h6" stroke="currentColor" strokeWidth="1.500" />
        </Svg>
        <Svg>
          <rect x=".8" y="2.800" width="14.400" height="10.400" stroke="currentColor" strokeWidth="1.500" />
          <path d="M3 5.500h10M3 8h10" stroke="currentColor" strokeWidth="1.400" strokeDasharray="1.500 1" />
          <path d="M4.500 11h7" stroke="currentColor" strokeWidth="1.300" />
        </Svg>
        <Svg>
          <circle cx="6" cy="4" r="2.800" fill="#b4c0d0" />
          <path d="M1 12c0-5 8-6 9-3v4H1z" fill="#b4c0d0" />
          <path d="M7 9.500h3v2.500H7.500V15H10M12 9h3.500v6H12z" fill="#fff" stroke="#a4b2c8" />
        </Svg>
        <Svg><path d="M5 1.500c1.500 1.500 4.500 1.500 6 0l5 3-2 3.500-1.500-.8V14.500h-9V7.200L2 8 0 4.500z" fill="currentColor" /></Svg>
        <Svg><path d="M14.500 3.500l-3 2.500-1.500-1.500L12.500 1.500C9 .5 6.500 3 7.500 6.500L1 13l2 2 6.500-6.500c3.500 1 6-1.500 5-5z" fill="currentColor" /></Svg>
      </div>
    </div>
  )
}

function IeGlyph({ color, ring }: { color: string; ring?: string }) {
  return (
    <Svg size="size-[23px]">
      <path d="M12.300 11.200A4.800 4.800 0 113.400 8.300 4.800 4.800 0 0113 8.500H5.500" stroke={color} strokeWidth="2.700" />
      {ring && <path d="M3 14.500C-1 14 5 3.500 12 1.300c2.500-.6 2.800.7 2 2.500" stroke={ring} strokeWidth="1.200" />}
    </Svg>
  )
}

const swirl = "M14.500 2.500c-1 2-3 1.500-5 1.200C5.500 3 2.500 5 2.500 8.500s3 6 6 5.700c3-.3 4.500-2.500 4-5C12 7 8 6 7 8.200c-.6 1.600 1.500 2.800 2.800 1.500"

const taskApps = [
  {
    name: "任务视图",
    glyph: (
      <Svg size="size-[21px]">
        <path d="M4 3h8v10H4zM2.500 4.500h-2v7h2M13.500 4.500h2v7h-2" stroke="#fff" strokeWidth=".9" />
      </Svg>
    ),
  },
  {
    name: "搜狗",
    glyph: (
      <Svg size="size-[22px]">
        <path d="M7.300 7.500V1C3 0 1 2.500 1 5c0 2 2 2.500 6.300 2.500zM8.500 7.200H15C16 3 13.500 1 11 1c-2 0-2.500 2-2.500 6.200zM8.700 8.500V15c4.300 1 6.300-1.500 6.300-4 0-2-2-2.500-6.300-2.500zM7.500 8.800H1C0 13 2.500 15 5 15c2 0 2.500-2 2.500-6.200z" fill="#e4e4e4" />
      </Svg>
    ),
  },
  { name: "浏览器", glyph: <IeGlyph color="#e2e2e2" ring="#e2e2e2" /> },
  {
    name: "广联达",
    glyph: (
      <Svg size="size-5">
        <path d={swirl} stroke="#d8d8d8" strokeWidth="2.600" />
        <path d={swirl} stroke="#020b0e" strokeWidth="1" />
      </Svg>
    ),
  },
  { name: "Edge", glyph: <IeGlyph color="#0b74d8" /> },
  { name: "Internet Explorer", glyph: <IeGlyph color="#4aa8ee" ring="#f7c92f" /> },
  {
    name: "文件资源管理器",
    glyph: (
      <Svg size="size-[22px]">
        <path d="M.5 2h5l1 1.300h9V14H.5z" fill="#fbe08a" />
        <path d="M.5 2h5v1.500h-5z" fill="#e9b73e" />
        <path d="M4 14V8.500h8V14h-2v-2.500H6V14z" fill="#35a7e4" />
      </Svg>
    ),
  },
  { name: "广联达云", running: true, glyph: <Svg size="size-6"><path d={swirl} stroke="#1a9cf5" strokeWidth="2.700" /></Svg> },
  {
    name: "360浏览器",
    running: true,
    glyph: (
      <Svg size="size-[23px]">
        <circle cx="8" cy="8" r="7.300" fill="#56b52b" stroke="#e6f5dc" strokeWidth=".8" />
        <path d="M11.500 10a4 4 0 11.600-2H5.500" stroke="#fff" strokeWidth="1.800" />
        <path d="M1.500 13C5 7 10 3 14.500 2" stroke="#a9e08a" />
      </Svg>
    ),
  },
  { name: "钢筋算量", running: true, active: true, glyph: <AppLogo size="size-6" /> },
]

function Taskbar() {
  return (
    <footer className="flex h-10 shrink-0 bg-[#020b0e] text-white">
      <button className="flex items-center justify-center w-12 bg-black" aria-label="开始">
        <Svg>
          <path d="M0 2.300l6.500-.9v6.100H0zM7.300 1.300L16 0v7.500H7.300zM0 8.300h6.500v6.200L0 13.600zM7.300 8.300H16V16l-8.700-1.300z" fill="#fff" />
        </Svg>
      </button>
      <div className="flex items-center w-[344px] pl-2 pr-3 bg-[#333] shrink-0">
        <svg viewBox="0 0 22 22" className="size-[22px] shrink-0" fill="none"><circle cx="11" cy="11" r="9.200" stroke="#f0f0f0" strokeWidth="2.600" /></svg>
        <input
          type="text"
          aria-label="搜索"
          placeholder="在这里输入你要搜索的内容"
          className="flex-1 min-w-0 ml-[6px] bg-transparent text-[14px] outline-none placeholder:text-[#969696]"
        />
        <Svg>
          <path d="M5.500 1h4v8h-4zM3 7.500v3.500h9V7.500M7.500 11v4M5 15h5" stroke="#999" />
        </Svg>
      </div>
      {taskApps.map((app) => (
        <button
          key={app.name}
          aria-label={app.name}
          className={`flex flex-col items-center w-[50px] shrink-0 ${app.active ? "bg-[#323b3e]" : "px-1"}`}
        >
          <span className="flex flex-1 items-center">{app.glyph}</span>
          <span className={`h-[2px] w-full ${app.running ? "bg-[#76b9ed]" : ""}`} />
        </button>
      ))}
      <div className="flex items-center ml-auto gap-[9px] whitespace-nowrap">
        <span>链接</span>
        <div className="ml-[10px] mr-[10px] text-center text-[#f0a030] leading-4">
          <div>84%</div>
          <div>CPU使用</div>
        </div>
        <Svg size="size-[14px]"><path d="M1 11l7-7 7 7" stroke="#fff" strokeWidth="1.400" /></Svg>
        <Svg><path d="M4.500 5.500H15v6.500H4.500M15 7.500h1v2.500M1 2v2.500h4V2M1 5c0 3 4 3 4 0M3 7v5h2M8 7.500h5v3H8z" stroke="#fff" /></Svg>
        <Svg>
          <path d="M2 14.500C2 7.500 7.500 2.500 14.500 2.500M5 14.500c0-5 4-9 9.500-9M8 14.500c0-3.500 3-6 6.500-6" stroke="#bbb" />
          <path d="M11 14.500c0-2 1.500-3.500 3.500-3.500v3.500z" fill="#fff" stroke="#fff" />
        </Svg>
        <Svg><path d="M1 6h2.500L7 2.500v11L3.500 10H1zM9 6c1 1.300 1 2.700 0 4M11 4c2 2.500 2 5.500 0 8M13 2.500c3 3.500 3 7.500 0 11" stroke="#fff" /></Svg>
        <svg viewBox="0 0 23 14" className="w-[23px] h-[14px]" fill="none" stroke="#fff">
          <path d="M.5.5h22v13H.5z" />
          <path d="M3 4h17M3 7h17" strokeDasharray="2 1" />
          <path d="M3 10.500h2M7 10.500h9M18 10.500h2" />
        </svg>
        <Svg size="size-[14px]"><path d="M2 4.500h12v5.500H2zM8 1v14" stroke="#fff" strokeWidth="1.600" /></Svg>
        <span className="ml-1"><SogouLogo size="size-4" /></span>
        <div className="w-[64px] ml-1 text-center leading-[19px]">
          <div>11:12</div>
          <div>2018/2/20</div>
        </div>
      </div>
      <button className="relative flex items-center justify-center w-[53px] bg-black" aria-label="通知">
        <Svg><path d="M0 1h15v11H6l-3 3v-3H0z" fill="#fff" /><path d="M3 4h9M3 6.500h9M3 9h6" stroke="#222" /></Svg>
        <span className="absolute left-[22px] top-[19px] flex items-center justify-center w-[22px] h-4 rounded-full bg-[#333] border border-[#888] font-bold leading-4">21</span>
      </button>
      <div className="w-[5px] border-l border-[#555] bg-black" />
    </footer>
  )
}

export default function App() {
  return (
    <div className={`relative flex flex-col h-screen overflow-hidden bg-[#f0f0f0] text-[12px] leading-4 text-black ${UI_FONT}`}>
      <TitleBar />
      <MenuBar />
      <MainToolbar />
      <main className="flex flex-1 min-h-0">
        <ModuleNav />
        <div className="flex flex-col flex-1 min-w-0 ml-[6px] mb-[2px]">
          <ComponentToolbar />
          <div className="flex flex-1 min-h-0">
            <ComponentList />
            <PropertyEditor />
          </div>
        </div>
      </main>
      <StatusBar />
      <Taskbar />
      <StirrupDialog />
      <SogouBar />
    </div>
  )
}
